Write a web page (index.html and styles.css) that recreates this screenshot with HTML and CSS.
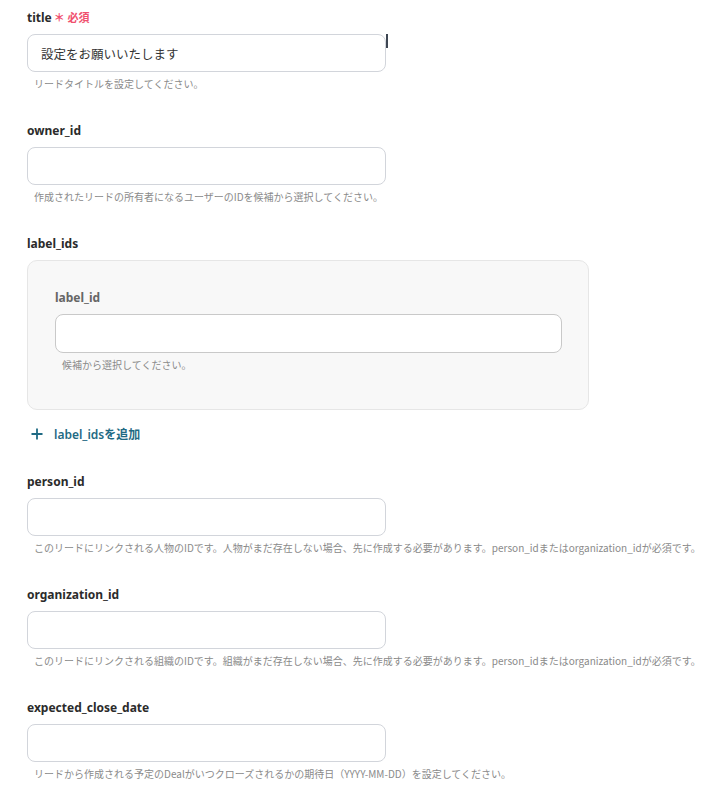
FILE: index.html
```html
<!DOCTYPE html>
<html lang="ja">
<head>
<meta charset="utf-8">
<link rel="stylesheet" href="styles.css">
</head>
<body>
<form class="form">
  <div class="field">
    <div class="label">title<span class="req">＊ 必須</span></div>
    <div class="input-row">
      <div class="input filled">設定をお願いいたします</div>
      <div class="caret-bar"></div>
    </div>
    <div class="hint">リードタイトルを設定してください。</div>
  </div>

  <div class="field">
    <div class="label">owner_id</div>
    <div class="input"></div>
    <div class="hint">作成されたリードの所有者になるユーザーのIDを候補から選択してください。</div>
  </div>

  <div class="field field-group">
    <div class="label">label_ids</div>
    <div class="group">
      <div class="label sub">label_id</div>
      <div class="input wide"></div>
      <div class="hint">候補から選択してください。</div>
    </div>
    <div class="add">
      <svg class="plus" width="12" height="12" viewBox="0 0 12 12"><path d="M6 0.5V11.5M0.5 6H11.5" stroke="#1f6a84" stroke-width="1.8" fill="none"/></svg>
      <span>label_idsを追加</span>
    </div>
  </div>

  <div class="field">
    <div class="label">person_id</div>
    <div class="input"></div>
    <div class="hint">このリードにリンクされる人物のIDです。人物がまだ存在しない場合、先に作成する必要があります。person_idまたはorganization_idが必須です。</div>
  </div>

  <div class="field">
    <div class="label">organization_id</div>
    <div class="input"></div>
    <div class="hint">このリードにリンクされる組織のIDです。組織がまだ存在しない場合、先に作成する必要があります。person_idまたはorganization_idが必須です。</div>
  </div>

  <div class="field">
    <div class="label">expected_close_date</div>
    <div class="input"></div>
    <div class="hint">リードから作成される予定のDealがいつクローズされるかの期待日（YYYY-MM-DD）を設定してください。</div>
  </div>
</form>
</body>
</html>
```

FILE: styles.css
```css
* { box-sizing: border-box; }
html, body { margin: 0; padding: 0; background: #ffffff; }
body {
  font-family: "Noto Sans", "Noto Sans CJK JP", sans-serif;
  color: #333333;
}
.form {
  padding: 10px 0 0 27px;
  display: flex;
  flex-direction: column;
}
.field {
  display: flex;
  flex-direction: column;
  margin-bottom: 32px;
}
.label {
  font-size: 12px;
  font-weight: 700;
  line-height: 16px;
  height: 16px;
  color: #2b2b2b;
  margin-bottom: 8px;
  display: flex;
  align-items: center;
}
.req {
  color: #f0506e;
  font-size: 11px;
  font-weight: 700;
  margin-left: 2px;
}
.input-row { display: flex; align-items: flex-start; }
.caret-bar {
  width: 2px;
  height: 14px;
  background: #3d4652;
}
.input {
  width: 359px;
  height: 38px;
  border: 1px solid #d2d5db;
  border-radius: 8px;
  background: #fff;
  font-family: "Noto Sans CJK JP", sans-serif;
  font-size: 12.5px;
  color: #333;
  padding: 0 13px;
  display: flex;
  align-items: center;
}
.hint {
  font-family: "Noto Sans CJK JP", sans-serif;
  font-size: 10px;
  line-height: 14px;
  color: #8a8a8a;
  margin-top: 5px;
  padding-left: 7px;
  white-space: nowrap;
}
.group {
  width: 562px;
  background: #f8f8f8;
  border: 1px solid #e6e6e6;
  border-radius: 10px;
  padding: 29px 27px 37px 27px;
}
.label.sub { color: #666666; }
.input.wide { width: 507px; height: 39px; border-color: #c9c9c9; }
.add {
  margin-top: 16px;
  height: 16px;
  display: flex;
  align-items: center;
  color: #1f6a84;
  font-family: "Noto Sans", "Noto Sans CJK JP", sans-serif;
  font-size: 12px;
  font-weight: 600;
  padding-left: 4px;
}
.plus { margin-right: 11px; }
```
